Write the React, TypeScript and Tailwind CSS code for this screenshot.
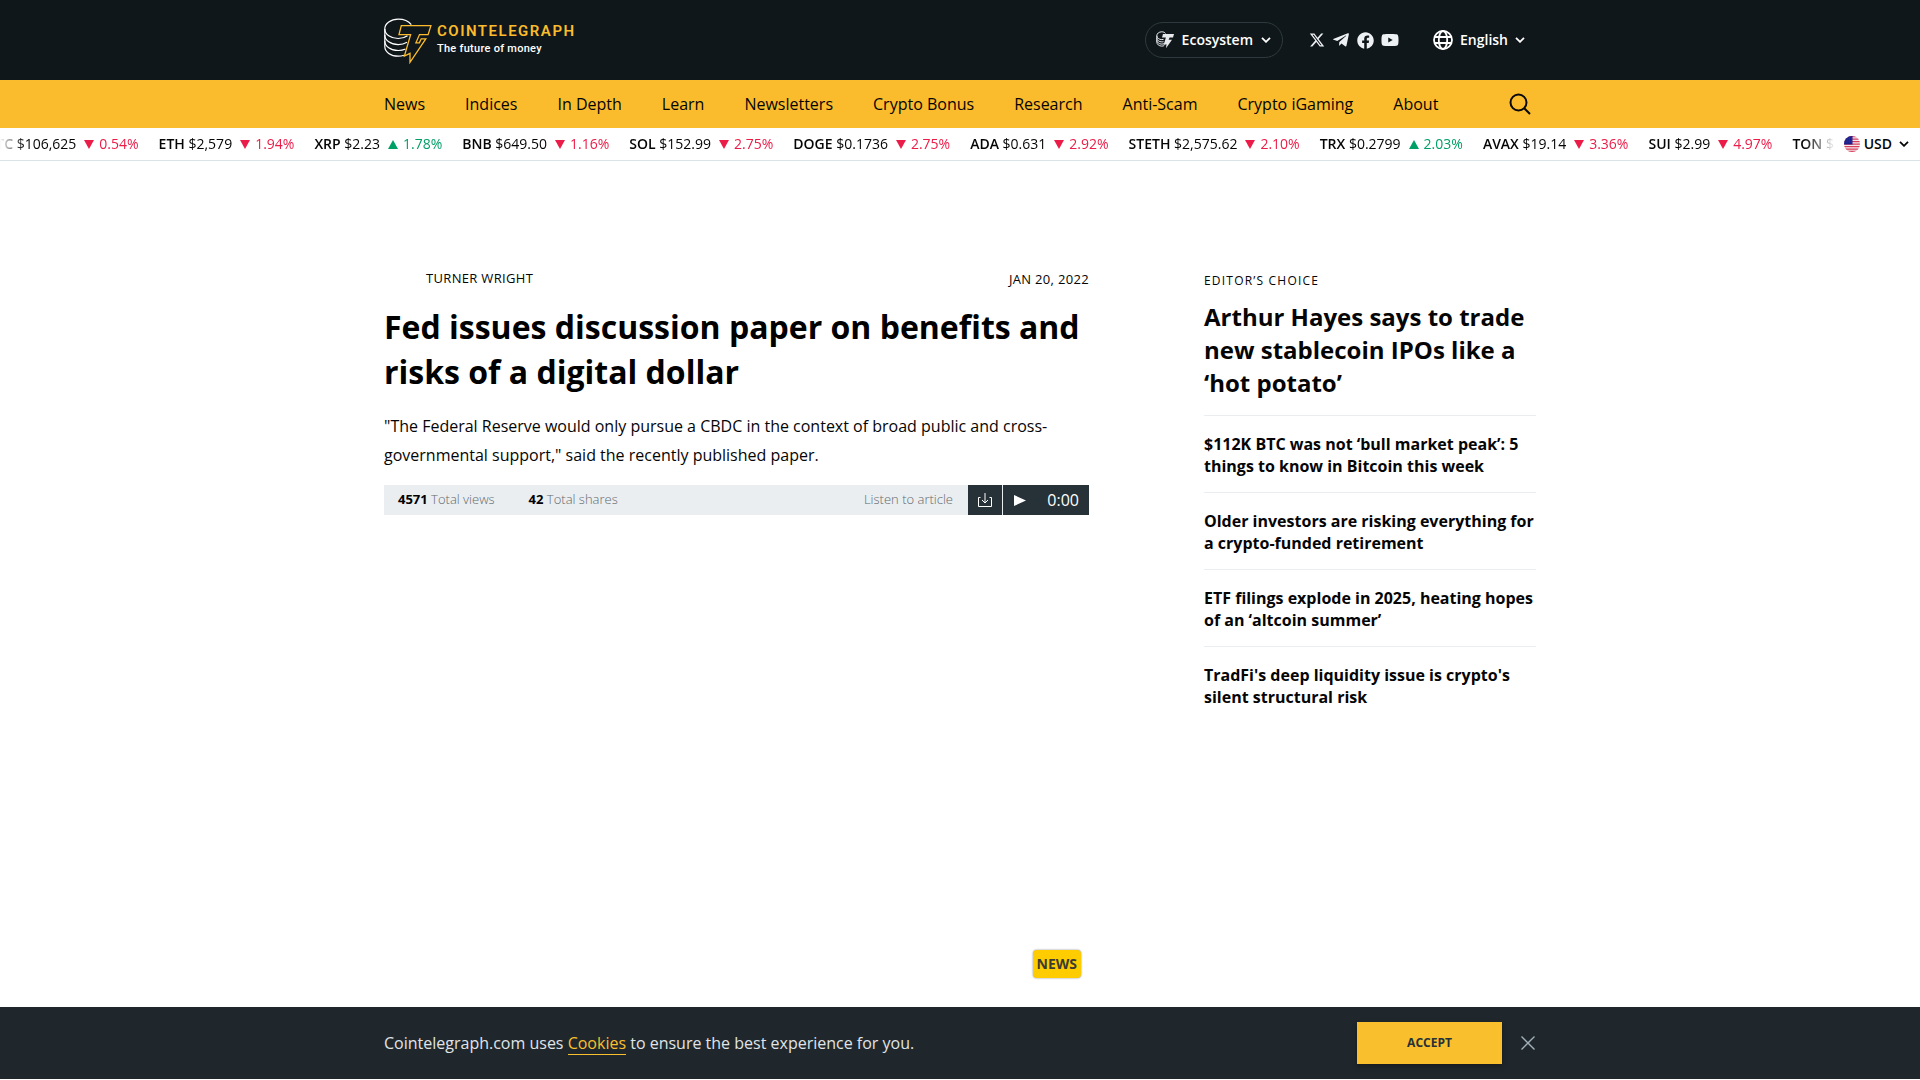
import type { ReactNode } from "react";
import { FaFacebook, FaTelegramPlane, FaYoutube } from "react-icons/fa";
import { FaXTwitter } from "react-icons/fa6";

const navItems = [
  "News",
  "Indices",
  "In Depth",
  "Learn",
  "Newsletters",
  "Crypto Bonus",
  "Research",
  "Anti-Scam",
  "Crypto iGaming",
  "About",
];

type Quote = { symbol: string; price: string; change?: string; up?: boolean };

const quotes: Quote[] = [
  { symbol: "BTC", price: "$106,625", change: "0.54%" },
  { symbol: "ETH", price: "$2,579", change: "1.94%" },
  { symbol: "XRP", price: "$2.23", change: "1.78%", up: true },
  { symbol: "BNB", price: "$649.50", change: "1.16%" },
  { symbol: "SOL", price: "$152.99", change: "2.75%" },
  { symbol: "DOGE", price: "$0.1736", change: "2.75%" },
  { symbol: "ADA", price: "$0.631", change: "2.92%" },
  { symbol: "STETH", price: "$2,575.62", change: "2.10%" },
  { symbol: "TRX", price: "$0.2799", change: "2.03%", up: true },
  { symbol: "AVAX", price: "$19.14", change: "3.36%" },
  { symbol: "SUI", price: "$2.99", change: "4.97%" },
  { symbol: "TON", price: "$" },
];

const picks = [
  "$112K BTC was not ‘bull market peak’: 5 things to know in Bitcoin this week",
  "Older investors are risking everything for a crypto-funded retirement",
  "ETF filings explode in 2025, heating hopes of an ‘altcoin summer’",
  "TradFi's deep liquidity issue is crypto's silent structural risk",
];

function Container({ className = "", children }: { className?: string; children: ReactNode }) {
  return <div className={`mx-auto w-full max-w-[1152px] ${className}`}>{children}</div>;
}

function LogoMark() {
  return (
    <svg viewBox="0 0 48 46" className="mt-0.5 h-[46px] w-12" fill="none" aria-hidden="true">
      <g stroke="#fff" strokeWidth="1.2">
        <path d="M27.3 6.600C24.800 3.400 20 1.200 14.200 1.200 6.800 1.200.8 5.500.8 10.900s6 9.600 13.400 9.600c3.600 0 6.900-1 9.300-2.700" />
        <path d="M.8 10.900V28.600c0 5.300 6 9.600 13.400 9.600 2 0 4-.3 5.700-.9" />
        <path d="M.8 17c0 5.300 6 9.600 13.400 9.600 3.400 0 6.400-.9 8.800-2.400" />
        <path d="M.8 22.900c0 5.300 6 9.600 13.400 9.600 2.700 0 5.200-.5 7.300-1.500" />
      </g>
      <path
        d="M17.300 7.600h29.600l-2.800 9h-8.600l-3.600 8.200h3.500l1.800-4h4.600L26 44.300v-9l-5.600 2.700 6.200-21.400H15z"
        stroke="#fabc2c"
        strokeWidth="1.300"
      />
    </svg>
  );
}

function EcosystemIcon() {
  return (
    <svg viewBox="0 0 18 18" className="size-[18px]" fill="none" aria-hidden="true">
      <g stroke="#e6eaec" strokeWidth="1">
        <path d="M9.500 2.500C8.700 1.300 7.300.8 5.800.8 3 .8.800 2.500.800 4.700s2.200 3.900 5 3.900c.6 0 1.200-.1 1.700-.2" />
        <path d="M.8 4.700v6.500c0 2.100 2.200 3.900 5 3.900.9 0 1.700-.2 2.400-.5M.8 7c0 2.100 2.200 3.900 5 3.900.7 0 1.200-.1 1.700-.2M.8 9.200c0 2.100 2.200 3.900 5 3.900.8 0 1.600-.2 2.300-.5" />
      </g>
      <path d="M7 3h11l-1 3.400h-3.400l-1 2.400H16l-6 8.400.5-4L7.600 14l2.300-7.600H6z" fill="#e6eaec" />
    </svg>
  );
}

function Chevron() {
  return (
    <svg viewBox="0 0 10 6" className="h-1.5 w-2.5" fill="none" stroke="currentColor" strokeWidth="1.800" aria-hidden="true">
      <path d="m1 .8 4 4 4-4" />
    </svg>
  );
}

function Globe() {
  return (
    <svg viewBox="0 0 20 20" className="size-5" fill="none" stroke="#fff" strokeWidth="1.800" aria-hidden="true">
      <circle cx="10" cy="10" r="9" />
      <ellipse cx="10" cy="10" rx="4.200" ry="9" />
      <path d="M1.500 7h17M1.500 13h17" />
    </svg>
  );
}

function Flag() {
  return (
    <svg viewBox="0 0 16 16" className="size-4" aria-hidden="true">
      <clipPath id="flag-disc">
        <circle cx="8" cy="8" r="8" />
      </clipPath>
      <g clipPath="url(#flag-disc)">
        <path fill="#f5e9ec" d="M0 0h16v16H0z" />
        <path stroke="#d8405a" strokeWidth="1.300" d="M0 .6h16M0 3.100h16M0 5.600h16M0 8.100h16M0 10.600h16M0 13.100h16M0 15.500h16" />
        <path fill="#1b1f8a" d="M0 0h8.500v8.500H0z" />
        <path stroke="#5a5fb5" strokeWidth=".6" strokeDasharray=".6 1.200" d="M0 2h8.500M0 4h8.500M0 6h8.500" />
      </g>
    </svg>
  );
}

function Header() {
  return (
    <header className="bg-[#10171b] text-white">
      <Container className="flex h-20 items-center justify-between">
        <a href="#" className="flex items-center gap-[5px]">
          <LogoMark />
          <span className="flex flex-col pb-0.5 font-[Roboto]">
            <span className="text-[15px] leading-5 font-semibold tracking-widest text-[#fabc2c]">COINTELEGRAPH</span>
            <span className="text-[11px] leading-4 font-medium tracking-wide">The future of money</span>
          </span>
        </a>
        <div className="flex items-center pr-[11px] text-sm font-semibold">
          <button type="button" className="flex h-9 items-center gap-2 rounded-full border border-[#2e393e] px-[10px] pr-[11px]">
            <EcosystemIcon />
            Ecosystem
            <Chevron />
          </button>
          <div className="ml-[26px] flex items-center gap-[7px] text-[#eef1f3]">
            <a href="#" aria-label="X"><FaXTwitter className="size-4" /></a>
            <a href="#" aria-label="Telegram"><FaTelegramPlane className="size-[18px]" /></a>
            <a href="#" aria-label="Facebook"><FaFacebook className="size-[17px]" /></a>
            <a href="#" aria-label="YouTube"><FaYoutube className="size-[18px]" /></a>
          </div>
          <button type="button" className="ml-[34px] flex items-center gap-[7px]">
            <Globe />
            English
            <Chevron />
          </button>
        </div>
      </Container>
    </header>
  );
}

function Nav() {
  return (
    <nav className="bg-[#fabc2c]">
      <Container className="flex h-12 items-center justify-between pr-[5px]">
        <ul className="flex gap-10">
          {navItems.map((item) => (
            <li key={item}>
              <a href="#">{item}</a>
            </li>
          ))}
        </ul>
        <button type="button" aria-label="Search">
          <svg viewBox="0 0 22 22" className="size-[22px]" fill="none" stroke="#0a0a0a" strokeWidth="2" aria-hidden="true">
            <circle cx="9.500" cy="9.500" r="8" />
            <path d="m15 15 6 6" />
          </svg>
        </button>
      </Container>
    </nav>
  );
}

function Ticker() {
  return (
    <div className="flex h-[33px] items-center border-b border-[#dae3e7] text-sm">
      <div className="min-w-0 flex-1 overflow-hidden [mask-image:linear-gradient(to_right,transparent,black_24px,black_calc(100%-32px),transparent)]">
        <ul className="-ml-[13px] flex gap-5 whitespace-nowrap">
          {quotes.map((q) => (
            <li key={q.symbol} className="flex items-center">
              <span>
                <span className="font-semibold">{q.symbol}</span> {q.price}
              </span>
              {q.change && (
                <>
                  <svg viewBox="0 0 10 9" className="mr-[5px] ml-2 h-[9px] w-[10px]" aria-hidden="true">
                    {q.up ? <path fill="#009f66" d="M5 0l5 9H0z" /> : <path fill="#eb1c48" d="M0 0h10L5 9z" />}
                  </svg>
                  <span className={q.up ? "text-[#009f66]" : "text-[#eb1c48]"}>{q.change}</span>
                </>
              )}
            </li>
          ))}
        </ul>
      </div>
      <button type="button" className="ml-2 flex items-center gap-1 pr-[11px] font-semibold">
        <Flag />
        USD
        <span className="ml-[3px]">
          <Chevron />
        </span>
      </button>
    </div>
  );
}

function Article() {
  return (
    <article className="w-full max-w-[705px]">
      <div className="flex items-center justify-between text-[13px] leading-5 tracking-wide uppercase">
        <a href="#" className="pl-[42px]">Turner Wright</a>
        <time dateTime="2022-01-20" className="pt-[2px]">Jan 20, 2022</time>
      </div>
      <h1 className="mt-[15px] text-[32px] leading-[45px] font-bold text-black">
        Fed issues discussion paper on benefits and risks of a digital dollar
      </h1>
      <p className="mt-[18px] leading-[29px]">
        "The Federal Reserve would only pursue a CBDC in the context of broad public and cross-governmental support,"
        said the recently published paper.
      </p>
      <div className="mt-[15px] flex h-[30px] items-stretch bg-[#eaeef1] text-[13px] text-[#63696d]">
        <p className="flex flex-1 items-center gap-[34px] pl-[14px] font-light">
          <span>
            <b className="font-bold text-black">4571</b> Total views
          </span>
          <span>
            <b className="font-bold text-black">42</b> Total shares
          </span>
        </p>
        <span className="flex items-center pr-[15px] font-light">Listen to article</span>
        <button type="button" aria-label="Download audio" className="flex w-[34px] items-center justify-center bg-[#263138]">
          <svg viewBox="0 0 14 14" className="size-[14px]" fill="none" stroke="#fff" strokeWidth="1" aria-hidden="true">
            <path d="M2.500 4.500h-2v9h13v-9h-2M7 0v10M4 7l3 3 3-3" />
          </svg>
        </button>
        <button
          type="button"
          aria-label="Play audio"
          className="ml-px flex w-[86px] items-center justify-between bg-[#263138] pr-[10px] pl-[11px] text-base text-white"
        >
          <svg viewBox="0 0 12 11" className="h-[11px] w-3" fill="#fff" aria-hidden="true">
            <path d="M0 0l12 5.500L0 11z" />
          </svg>
          <span>0:00</span>
        </button>
      </div>
      <div className="mt-[435px] flex justify-end pr-2">
        <a
          href="#"
          className="rounded-[4px] bg-[#ffcc00] px-1 text-sm leading-7 font-bold text-[#3b3b33] shadow-[0_0_2px_rgba(0,0,0,0.5)]"
        >
          NEWS
        </a>
      </div>
    </article>
  );
}

function Sidebar() {
  return (
    <aside className="w-full max-w-[332px] pt-1">
      <h2 className="text-xs leading-5 tracking-widest uppercase">Editor’s choice</h2>
      <a href="#" className="mt-[9px] block text-2xl leading-[33px] font-bold">
        Arthur Hayes says to trade new stablecoin IPOs like a ‘hot potato’
      </a>
      <ul className="mt-4">
        {picks.map((pick) => (
          <li key={pick} className="border-t border-[#eaeef1] pt-[17px] pb-[15px]">
            <a href="#" className="block leading-[22px] font-bold">
              {pick}
            </a>
          </li>
        ))}
      </ul>
    </aside>
  );
}

function CookieBar() {
  return (
    <div className="sticky bottom-px mt-auto mb-px bg-[#1f272c]">
      <Container className="flex h-[72px] items-center">
        <p className="flex-1 text-[#e0e4e6]">
          Cointelegraph.com uses{" "}
          <a href="#" className="border-b border-[#fabf2c] text-[#fabf2c]">
            Cookies
          </a>{" "}
          to ensure the best experience for you.
        </p>
        <button
          type="button"
          className="h-[42px] w-[145px] bg-[#fabf2c] text-xs font-bold text-[#263138] shadow-[0_2px_5px_rgba(0,0,0,0.3)]"
        >
          ACCEPT
        </button>
        <button type="button" aria-label="Close" className="mr-px ml-[19px]">
          <svg viewBox="0 0 14 14" className="size-[14px]" stroke="#a1b0b8" strokeWidth="1.400" aria-hidden="true">
            <path d="m.5.5 13 13M13.500.5l-13 13" />
          </svg>
        </button>
      </Container>
    </div>
  );
}

export default function App() {
  return (
    <div className="flex min-h-screen flex-col bg-white font-['Open_Sans',sans-serif] text-base text-[#050505]">
      <Header />
      <Nav />
      <Ticker />
      <main>
        <Container className="flex justify-between pt-[106px]">
          <Article />
          <Sidebar />
        </Container>
      </main>
      <CookieBar />
    </div>
  );
}
